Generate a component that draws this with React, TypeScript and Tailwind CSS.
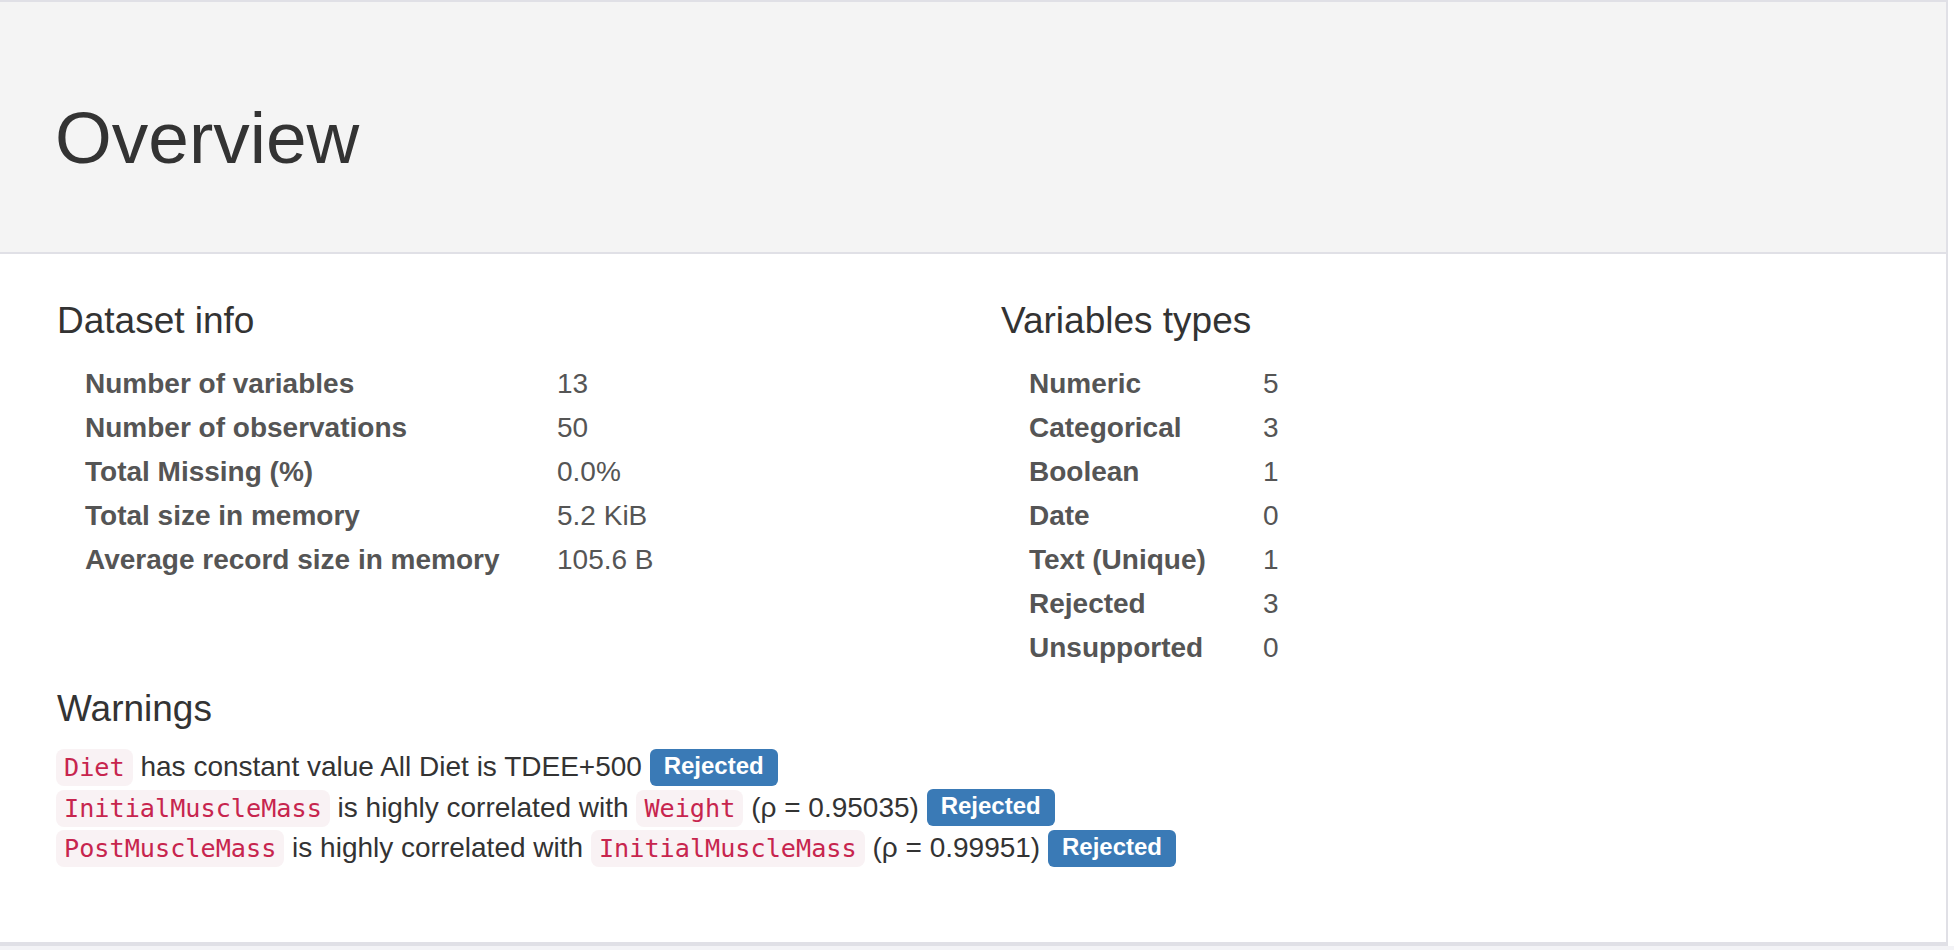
const DATASET_INFO: [string, string][] = [
  ["Number of variables", "13"],
  ["Number of observations", "50"],
  ["Total Missing (%)", "0.0%"],
  ["Total size in memory", "5.2 KiB"],
  ["Average record size in memory", "105.6 B"],
];

const VARIABLE_TYPES: [string, string][] = [
  ["Numeric", "5"],
  ["Categorical", "3"],
  ["Boolean", "1"],
  ["Date", "0"],
  ["Text (Unique)", "1"],
  ["Rejected", "3"],
  ["Unsupported", "0"],
];

const Code = ({ children }: { children: string }) => (
  <code className="font-['DejaVu_Sans_Mono',monospace] text-[25.2px] text-[#c7254e] bg-[#f9f2f4] px-[8px] py-[4px] rounded-[8px]">
    {children}
  </code>
);

const Rejected = () => (
  <span className="inline-block align-middle text-white text-[24px] font-bold leading-none bg-[#3a7ab6] rounded-[6px] pt-[5px] px-[14px] pb-[8px] -mt-[3px]">
    Rejected
  </span>
);

const StatsTable = ({ rows, labelWidth }: { rows: [string, string][]; labelWidth: string }) => (
  <div className="ml-[28px]">
    {rows.map(([label, value]) => (
      <div key={label} className="flex items-center h-[44px] text-[28px] text-[#555]">
        <span className={`${labelWidth} shrink-0 font-bold`}>{label}</span>
        <span>{value}</span>
      </div>
    ))}
  </div>
);

export default function App() {
  return (
    <div className="w-[1954px] h-[950px] overflow-hidden bg-white font-['Liberation_Sans',Arial,sans-serif] text-[#333]">
      <div className="w-[1948px] border-t-2 border-r-2 border-b-4 border-[#e0e0e6]">
        {/* Header */}
        <div className="h-[252px] bg-[#f4f4f4] border-b-2 border-[#e0e0e6] pl-[55px] pt-[96px]">
          <h1 className="text-[73px] leading-[1.1] font-normal">Overview</h1>
        </div>

        {/* Body */}
        <div className="h-[688px] pl-[57px] pt-[47px]">
          <div className="grid grid-cols-[944px_1fr]">
            <div>
              <h4 className="text-[37px] leading-[40px] mb-[21px]">Dataset info</h4>
              <StatsTable rows={DATASET_INFO} labelWidth="w-[472px]" />
            </div>
            <div>
              <h4 className="text-[37px] leading-[40px] mb-[21px]">Variables types</h4>
              <StatsTable rows={VARIABLE_TYPES} labelWidth="w-[234px]" />
            </div>
          </div>

          <h4 className="text-[37px] leading-[40px] mt-[19px] mb-[18px]">Warnings</h4>
          <div className="-ml-[1px] text-[28px] leading-[40px]">
            <div className="h-[40.5px] whitespace-nowrap">
              <Code>Diet</Code> has constant value All Diet is TDEE+500 <Rejected />
            </div>
            <div className="h-[40.5px] whitespace-nowrap">
              <Code>InitialMuscleMass</Code> is highly correlated with <Code>Weight</Code> (ρ = 0.95035) <Rejected />
            </div>
            <div className="h-[40.5px] whitespace-nowrap">
              <Code>PostMuscleMass</Code> is highly correlated with <Code>InitialMuscleMass</Code> (ρ = 0.99951) <Rejected />
            </div>
          </div>
        </div>
      </div>
      <div className="h-[4px] bg-[#f3f3f6]" />
    </div>
  );
}
